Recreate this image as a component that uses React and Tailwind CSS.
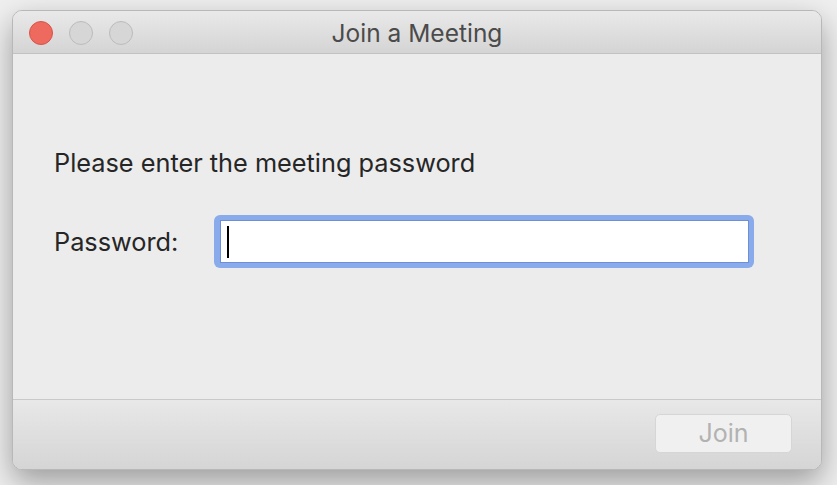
import React from "react";

export default function App() {
  return (
    <div
      className="w-[837px] h-[485px] bg-[#efefef] pl-[12px] pt-[10px] overflow-hidden"
      style={{ fontFamily: "Inter, 'Noto Sans', sans-serif" }}
    >
      <div className="w-[810px] h-[460px] rounded-[10px] border border-[#b8b8b8] shadow-[0_12px_30px_rgba(0,0,0,0.35)] overflow-hidden flex flex-col bg-[#ececec]">
        {/* title bar */}
        <div className="relative h-[43px] shrink-0 flex items-center justify-center bg-gradient-to-b from-[#e9e9e9] to-[#d4d4d4] border-b border-[#c2c2c2]">
          <div className="absolute left-[16px] top-[10px] flex gap-[16px]">
            <span className="w-[24px] h-[24px] rounded-full bg-[#ee6a5f] border border-[#d8534a]" />
            <span className="w-[24px] h-[24px] rounded-full bg-[#d6d6d6] border border-[#bcbcbc]" />
            <span className="w-[24px] h-[24px] rounded-full bg-[#d6d6d6] border border-[#bcbcbc]" />
          </div>
          <span className="text-[24.5px] leading-[30px] text-[#4b4b4b] pt-[2px]">Join a Meeting</span>
        </div>

        {/* body */}
        <div className="flex-1 flex flex-col pl-[41px] pt-[92px]">
          <p className="text-[25.3px] leading-[34px] text-[#262626]">Please enter the meeting password</p>
          <div className="flex items-center mt-[35px]">
            <span className="w-[160px] text-[25.3px] text-[#262626]">Password:</span>
            <div className="w-[540px] h-[53px] rounded-[6px] bg-[#8aabeb] p-[5px] pl-[6px] pr-[5px]">
              <div className="w-full h-full bg-white border border-[#6e8fd6] flex items-center pl-[6px]">
                <span className="w-[2px] h-[32px] bg-black" />
              </div>
            </div>
          </div>
        </div>

        {/* footer */}
        <div className="h-[70px] shrink-0 border-t border-[#c9c9c9] bg-gradient-to-b from-[#e8e8e8] to-[#d5d5d5] flex justify-end pr-[29px] pt-[14px]">
          <div className="w-[137px] h-[39px] rounded-[5px] bg-[#f0f0f0] border border-[#d6d6d6] flex items-center justify-center text-[25px] text-[#b2b2b2]">
            Join
          </div>
        </div>
      </div>
    </div>
  );
}
